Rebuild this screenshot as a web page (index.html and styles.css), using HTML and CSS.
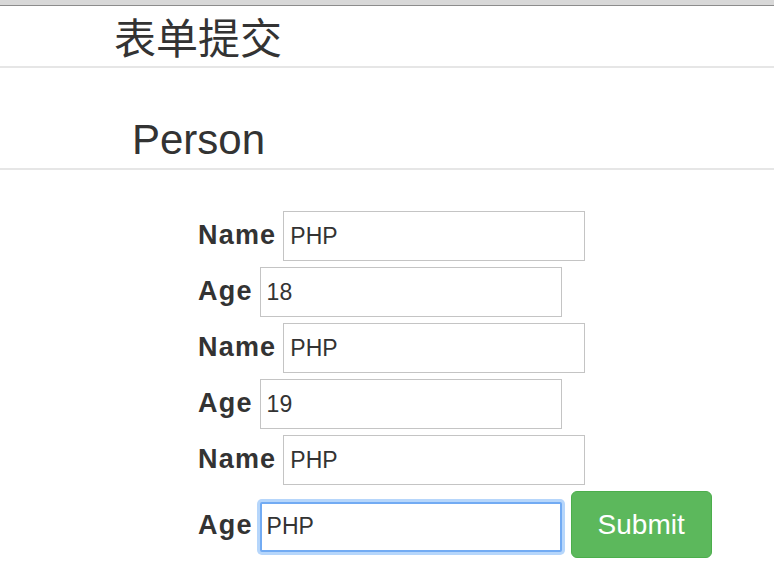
FILE: index.html
```html
<!DOCTYPE html>
<html lang="zh-CN">
<head>
<meta charset="utf-8">
<title>表单提交</title>
<link rel="stylesheet" href="styles.css">
</head>
<body>
<div class="chrome"></div>
<header class="site-header">
  <h1 class="site-title">表单提交</h1>
</header>
<section class="page-header">
  <h1 class="page-title">Person</h1>
</section>
<form class="person-form">
  <div class="form-row">
    <label class="field-label">Name</label>
    <input class="field-input" type="text" value="PHP">
  </div>
  <div class="form-row">
    <label class="field-label">Age</label>
    <input class="field-input" type="text" value="18">
  </div>
  <div class="form-row">
    <label class="field-label">Name</label>
    <input class="field-input" type="text" value="PHP">
  </div>
  <div class="form-row">
    <label class="field-label">Age</label>
    <input class="field-input" type="text" value="19">
  </div>
  <div class="form-row">
    <label class="field-label">Name</label>
    <input class="field-input" type="text" value="PHP">
  </div>
  <div class="form-row form-row-last">
    <label class="field-label">Age</label>
    <input class="field-input is-focused" type="text" value="PHP">
    <button class="btn-submit" type="button">Submit</button>
  </div>
</form>
</body>
</html>
```

FILE: styles.css
```css
html, body {
  margin: 0;
  padding: 0;
  background: #ffffff;
  color: #333333;
  font-family: "Liberation Sans", Arial, "Noto Sans CJK SC", sans-serif;
}

.chrome {
  height: 5px;
  background: #d8d8d8;
  border-bottom: 1px solid #8c8c8c;
}

.site-header {
  border-bottom: 2px solid #e6e6e6;
  padding-left: 114px;
}

.site-title {
  margin: 0;
  font-family: "Noto Sans CJK SC", "Liberation Sans", sans-serif;
  font-weight: 400;
  font-size: 42px;
  line-height: 60px;
}

.page-header {
  border-bottom: 2px solid #e6e6e6;
  padding: 49px 0 5px 132px;
}

.page-title {
  margin: 0;
  font-weight: 400;
  font-size: 42px;
  line-height: 46px;
}

.person-form {
  display: flex;
  flex-direction: column;
  gap: 6px;
  padding: 41px 0 0 198px;
}

.form-row {
  display: flex;
  align-items: baseline;
  gap: 7px;
}

.field-label {
  font-weight: 700;
  font-size: 27px;
  letter-spacing: 1.2px;
}

.field-input {
  box-sizing: border-box;
  width: 302px;
  height: 50px;
  margin: 0;
  padding: 0 6px;
  border: 1px solid #c4c4c4;
  border-radius: 0;
  background: #fff;
  color: #333;
  font-family: "Liberation Sans", Arial, sans-serif;
  font-size: 23px;
  outline: none;
}

.field-input.is-focused {
  border: 2px solid #72abf3;
  padding: 0 5px;
  box-shadow: 0 0 0 3px #b6d6fb;
  border-radius: 2px;
}

.form-row-last .is-focused {
  margin-right: 2px;
}

.btn-submit {
  box-sizing: border-box;
  height: 67px;
  padding: 0 26px;
  border: 1px solid #4cae4c;
  border-radius: 6px;
  background: #5cb85c;
  color: #ffffff;
  font-family: "Liberation Sans", Arial, sans-serif;
  font-size: 28px;
  line-height: 65px;
  cursor: pointer;
}
```
